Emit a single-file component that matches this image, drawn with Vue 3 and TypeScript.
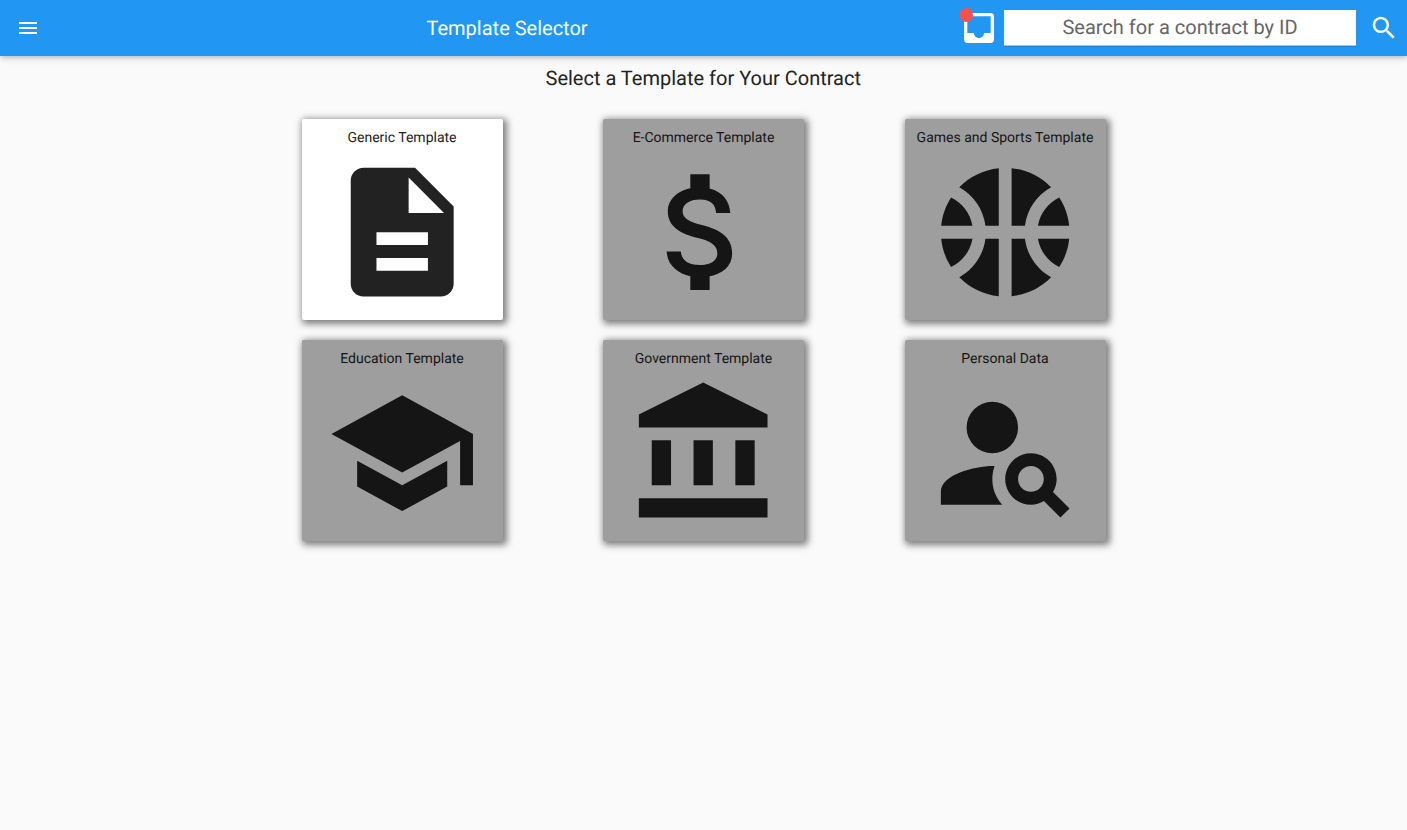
<script setup lang="ts">
import { ref } from 'vue'

interface Template {
  name: string
  path: string
}

const query = ref('')
const selected = ref(0)

const templates: Template[] = [
  {
    name: 'Generic Template',
    path: 'M14 2H6c-1.1 0-2 .9-2 2v16c0 1.1.9 2 2 2h12c1.1 0 2-.9 2-2V8l-6-6zm2 16H8v-2h8v2zm0-4H8v-2h8v2zm-3-5V3.5L18.5 9H13z',
  },
  {
    name: 'E-Commerce Template',
    path: 'M11.8 10.9c-2.27-.59-3-1.2-3-2.15 0-1.09 1.01-1.85 2.7-1.85 1.78 0 2.44.85 2.5 2.1h2.21c-.07-1.72-1.12-3.3-3.21-3.81V3h-3v2.16c-1.94.42-3.5 1.68-3.5 3.61 0 2.31 1.91 3.46 4.7 4.13 2.5.6 3 1.48 3 2.41 0 .69-.49 1.79-2.7 1.79-2.06 0-2.87-.92-2.98-2.1h-2.2c.12 2.19 1.76 3.42 3.68 3.83V21h3v-2.15c1.95-.37 3.5-1.5 3.5-3.55 0-2.84-2.43-3.81-4.7-4.4z',
  },
  {
    name: 'Games and Sports Template',
    path: 'M17.09 11h4.86c-.16-1.61-.71-3.11-1.54-4.4C18.68 7.43 17.42 9.05 17.09 11zM6.91 11C6.58 9.05 5.32 7.43 3.59 6.6 2.76 7.89 2.21 9.39 2.05 11h4.86zM15.07 11c.32-2.59 1.88-4.79 4.06-6-1.6-1.63-3.74-2.71-6.13-2.95V11h2.07zM8.93 11H11V2.05C8.61 2.29 6.46 3.37 4.87 5c2.18 1.21 3.74 3.41 4.06 6zM15.07 13H13v8.95c2.39-.24 4.54-1.32 6.13-2.95-2.18-1.21-3.74-3.41-4.06-6zM3.59 17.4c1.73-.83 2.99-2.45 3.32-4.4H2.05c.16 1.61.71 3.11 1.54 4.4zM17.09 13c.33 1.95 1.59 3.57 3.32 4.4.83-1.29 1.38-2.79 1.54-4.4h-4.86zM8.93 13c-.32 2.59-1.88 4.79-4.06 6 1.6 1.63 3.74 2.71 6.13 2.95V13H8.93z',
  },
  {
    name: 'Education Template',
    path: 'M5 13.18v4L12 21l7-3.82v-4L12 17l-7-3.82zM12 3L1 9l11 6 9-4.91V17h2V9L12 3z',
  },
  {
    name: 'Government Template',
    path: 'M4 10h3v7H4zM10.5 10h3v7h-3zM2 19h20v3H2zM17 10h3v7h-3zM12 1L2 6v2h20V6z',
  },
  {
    name: 'Personal Data',
    path: 'M10 4a4 4 0 1 0 0 8 4 4 0 0 0 0-8zM10.35 14.01C7.62 13.91 2 15.27 2 18v2h9.54c-2.47-2.76-1.23-5.89-1.19-5.99zM19.43 18.02c.36-.59.57-1.28.57-2.02 0-2.21-1.79-4-4-4s-4 1.79-4 4 1.79 4 4 4c.74 0 1.43-.22 2.02-.57L20.59 22 22 20.59l-2.57-2.57zM16 18c-1.1 0-2-.9-2-2s.9-2 2-2 2 .9 2 2-.9 2-2 2z',
  },
]
</script>

<template>
  <div class="page">
    <header class="bar">
      <button class="icon-button menu" aria-label="Menu">
        <svg viewBox="0 0 24 24"><path d="M3 18h18v-2H3v2zm0-5h18v-2H3v2zm0-7v2h18V6H3z" /></svg>
      </button>
      <h1 class="title">Template Selector</h1>
      <button class="icon-button inbox" aria-label="Inbox">
        <svg viewBox="0 0 24 24">
          <path d="M19 3H4.99c-1.11 0-1.98.89-1.98 2L3 19c0 1.1.88 2 1.99 2H19c1.1 0 2-.9 2-2V5c0-1.1-.9-2-2-2zm0 12h-4c0 1.66-1.35 3-3 3s-3-1.34-3-3H4.99V5H19v10z" />
        </svg>
        <span class="dot"></span>
      </button>
      <input v-model="query" class="search" type="text" placeholder="Search for a contract by ID" />
      <button class="icon-button find" aria-label="Search">
        <svg viewBox="0 0 24 24">
          <path d="M15.5 14h-.79l-.28-.27C15.41 12.59 16 11.11 16 9.5 16 5.91 13.09 3 9.5 3S3 5.91 3 9.5 5.91 16 9.5 16c1.61 0 3.09-.59 4.23-1.57l.27.28v.79l5 4.99L20.49 19l-4.99-5zm-6 0C7.01 14 5 11.99 5 9.5S7.01 5 9.5 5 14 7.01 14 9.5 11.99 14 9.5 14z" />
        </svg>
      </button>
    </header>

    <main>
      <h2 class="heading">Select a Template for Your Contract</h2>
      <div class="grid">
        <button
          v-for="(t, i) in templates"
          :key="t.name"
          class="card"
          :class="{ selected: i === selected }"
          @click="selected = i"
        >
          <span class="label">{{ t.name }}</span>
          <svg viewBox="0 0 24 24"><path :d="t.path" /></svg>
        </button>
      </div>
    </main>
  </div>
</template>

<style>
body {
  margin: 0;
  background: #fafafa;
}
</style>

<style scoped>
.page {
  min-height: 100vh;
  box-sizing: border-box;
  background: #fafafa;
  font-family: Roboto, sans-serif;
  color: #222;
  text-rendering: geometricPrecision;
}
.bar {
  display: flex;
  align-items: center;
  height: 56px;
  background: #2196f3;
  color: #fff;
  box-shadow: 0 2px 4px -1px rgba(0, 0, 0, 0.16), 0 4px 5px rgba(0, 0, 0, 0.06), 0 1px 10px rgba(0, 0, 0, 0.09);
}
.icon-button {
  position: relative;
  flex: none;
  padding: 0;
  border: 0;
  background: none;
  color: inherit;
}
svg {
  display: block;
  width: 100%;
  height: 100%;
  fill: currentColor;
}
.menu {
  width: 24px;
  height: 24px;
  margin-left: 16px;
}
.title {
  margin: 0 0 0 386.5px;
  font-size: 20px;
  font-weight: 400;
  line-height: 24px;
}
.inbox {
  width: 40px;
  height: 40px;
  margin-left: auto;
}
.dot {
  position: absolute;
  left: 0.3px;
  top: 0;
  width: 14px;
  height: 14px;
  border-radius: 50%;
  background: #ef5350;
}
.search {
  box-sizing: border-box;
  width: 352px;
  height: 36px;
  margin-left: 5px;
  padding: 0 0 1px;
  border: 0;
  border-bottom: 1px solid #c4c4c4;
  border-radius: 0;
  outline: 0;
  background: #fff;
  box-shadow: 0 1px #1c7fcd;
  color: #222;
  font: 400 20px Roboto, sans-serif;
  text-align: center;
  text-rendering: inherit;
}
.search::placeholder {
  color: #666;
  opacity: 1;
}
.find {
  width: 30px;
  height: 30px;
  margin: 0 8px 0 13px;
}
.heading {
  margin: 0;
  padding: 10px 0.5px 0 0;
  font-size: 20px;
  font-weight: 400;
  line-height: 24px;
  text-align: center;
}
.grid {
  display: grid;
  grid-template-columns: repeat(3, 201px);
  column-gap: 100.5px;
  row-gap: 20px;
  justify-content: center;
  margin-top: 29px;
}
.card {
  display: flex;
  flex-direction: column;
  align-items: center;
  box-sizing: border-box;
  height: 201px;
  padding: 11px 0 0;
  border: 0;
  border-radius: 2px;
  background: #9e9e9e;
  color: #151515;
  font: 400 14px/16px Roboto, sans-serif;
  text-rendering: inherit;
  box-shadow: 2px 2px 7px 2px rgba(0, 0, 0, 0.5);
}
.card.selected {
  background: #fff;
  color: #222;
}
.card svg {
  flex: none;
  width: 154.4px;
  height: 154.4px;
  margin-top: 9.3px;
}
</style>
